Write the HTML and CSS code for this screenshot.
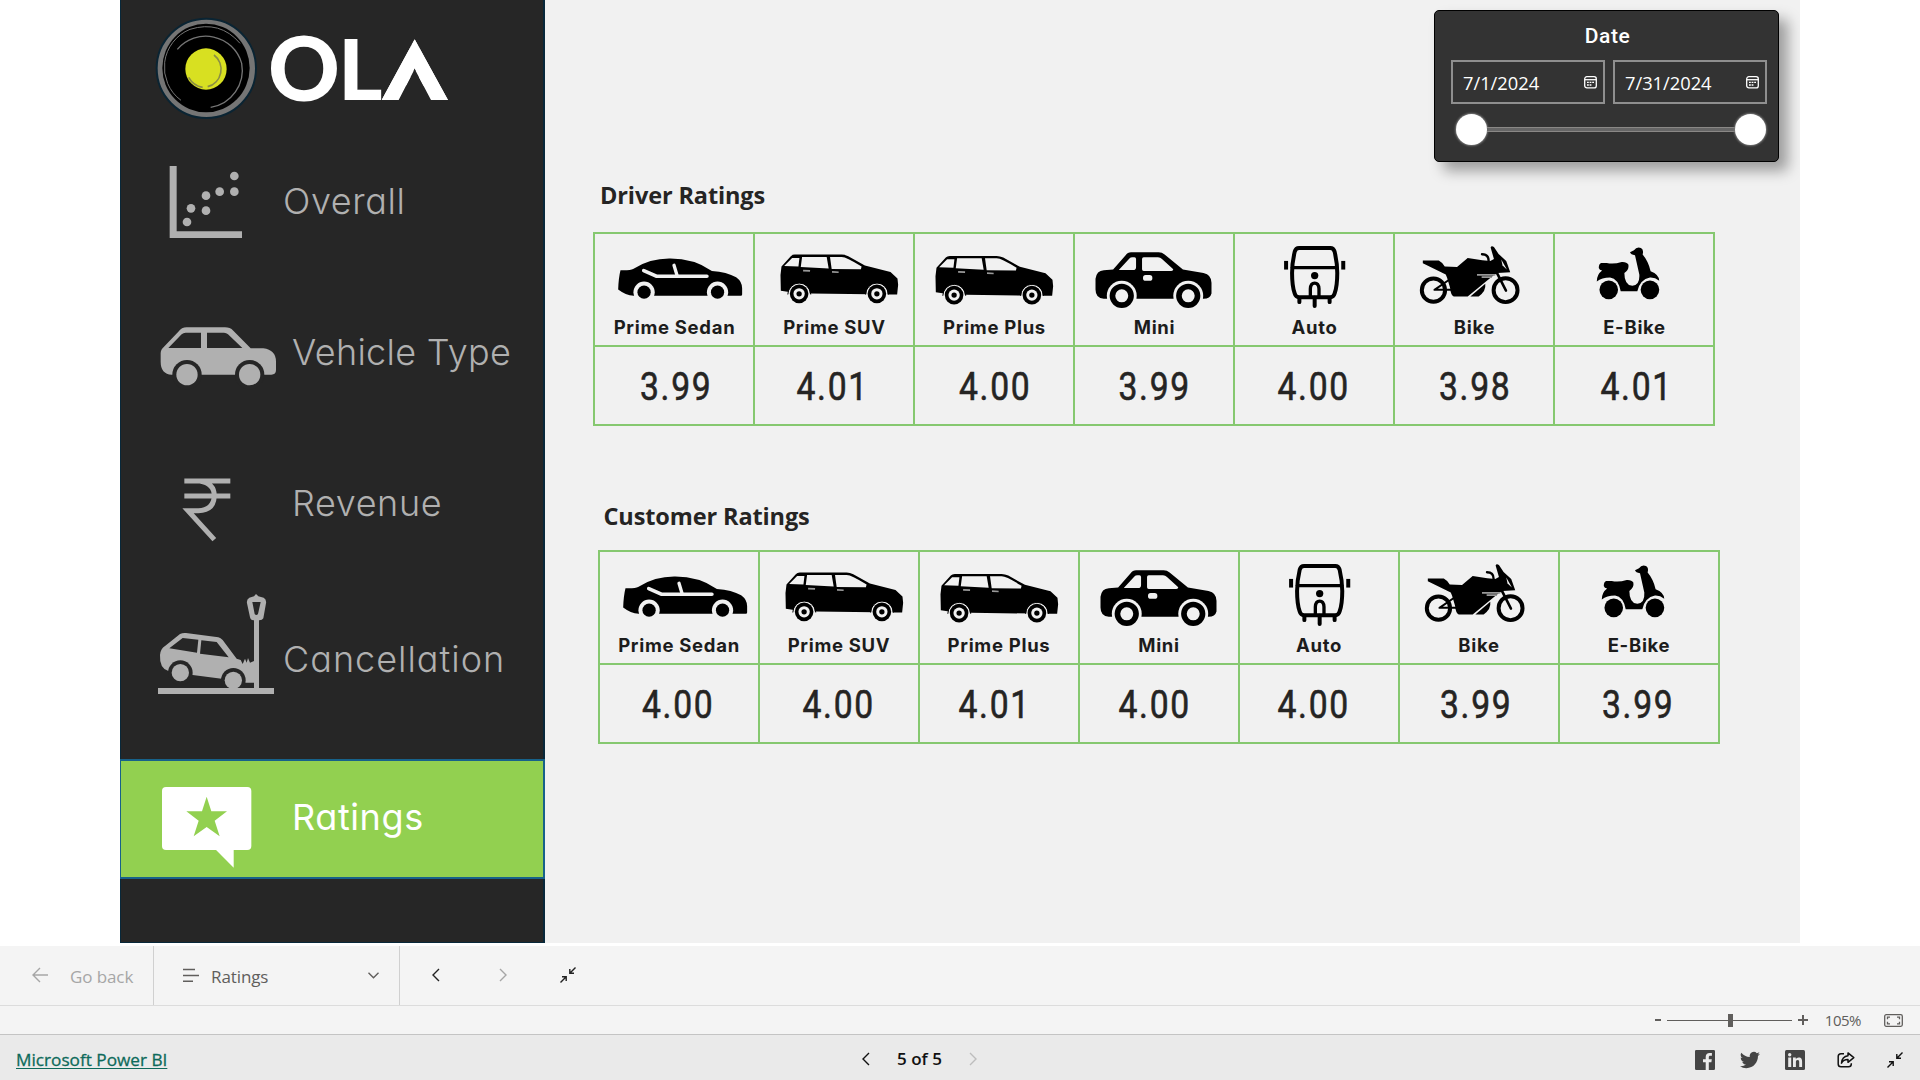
FILE: index.html
```html
<!DOCTYPE html>
<html lang="en">
<head>
<meta charset="utf-8">
<title>Ratings</title>
<link rel="stylesheet" href="styles.css">
</head>
<body>
<svg class="defs" width="0" height="0" aria-hidden="true">
  <symbol id="sedan" viewBox="41 189 480 340">
    <path d="M120 301Q150 302 158 297Q210 265 270 266Q340 266 395 303Q440 306 468 322Q486 335 486 355V374Q486 378 482 378H160Q135 376 113 359Q114 325 120 301Z"/>
    <circle class="cut" cx="191" cy="367" r="32"/><circle class="cut" cx="412" cy="367" r="32"/>
    <circle cx="191" cy="367" r="20"/><circle cx="412" cy="367" r="20"/>
    <path class="cut-line" d="M190 302L228 319H380" stroke-width="11"/><path class="cut-line" d="M281 286L290 316" stroke-width="10"/>
  </symbol>
  <symbol id="suv" viewBox="522 189 480 340">
    <path d="M604 290L632 259Q636 254 644 254H785Q795 254 805 259L855 287L932 306L953 326L955 345L952 374L926 374L692 371L622 366L602 363L601 315Z"/>
    <path class="cut" d="M612 288L636 264H658L655 290ZM666 261H740L746 296L662 291ZM750 261H785Q800 261 845 290L843 298L755 297Z"/>
    <path class="soft" d="M669 302L690 303M756 306L776 307"/>
    <g id="suv-wheel"><circle class="cut" cx="657" cy="372" r="32"/><path class="thin" d="M623 374A34 34 0 0 1 692 374"/><circle cx="657" cy="372" r="28"/><circle class="cut" cx="657" cy="372" r="17"/><circle cx="657" cy="372" r="8"/></g>
    <use href="#suv-wheel" x="234"/>
  </symbol>
  <symbol id="mini" viewBox="11 40 480 340">
    <path d="M75 178Q78 153 100 152L128 150L165 108Q172 98 182 98H265Q275 98 283 105L338 150L400 160Q424 165 424 190V222Q420 238 400 238H100Q75 236 75 210Z"/>
    <path class="cut" d="M145 151L177 117Q180 113 186 113H192Q197 113 197 118V144Q197 150 192 151ZM215 118Q215 113 220 113H263Q270 113 275 118L309 149Q309 154 303 154H220Q215 154 215 149Z"/>
    <rect class="cut" x="218" y="166" width="28" height="18" rx="8"/>
    <circle class="cut" cx="154" cy="229" r="45"/><circle class="cut" cx="354" cy="229" r="45"/>
    <circle cx="154" cy="229" r="28" class="tyre"/><circle cx="354" cy="229" r="28" class="tyre"/>
  </symbol>
  <symbol id="auto" viewBox="491 40 480 340">
    <g class="ink-line">
      <path stroke-width="12" d="M686 85H780Q790 85 793 96Q801 130 801 160Q801 200 793 222Q790 233 780 233H686Q676 233 673 222Q665 200 665 160Q665 130 673 96Q676 85 686 85Z"/>
      <path stroke-width="10" d="M666 144H800"/>
      <path stroke-width="10" d="M720 230V208Q721 191 733 191Q745 191 746 208V230"/>
      <path stroke-width="12" d="M733 235V260M687 236V248M778 236V248"/>
    </g>
    <circle cx="733" cy="168" r="11"/>
    <rect x="641" y="124" width="12" height="26"/><rect x="813" y="124" width="12" height="26"/>
  </symbol>
  <symbol id="bike" viewBox="41 40 480 340">
    <g class="ink-line">
      <circle cx="159" cy="212" r="35" stroke-width="12"/><circle cx="376" cy="212" r="36" stroke-width="12"/>
      <path stroke-width="6" d="M203 183L162 211H212"/>
      <path stroke-width="8" d="M350 160L377 213"/>
      <path stroke-width="7" d="M305 104Q325 104 325 124"/>
    </g>
    <path d="M127 123H175Q185 128 193 141L230 142L262 115L306 122L330 124L341 118L331 84Q333 77 341 82L355 103L378 124L390 158L352 160L340 167L262 231H220Q211 228 209 205L200 175L196 165L150 142L127 131Z"/>
    <path d="M270 231L315 193Q318 215 295 231Z"/>
    <path class="cut" d="M363 120L380 150L367 138Z"/>
    <path class="soft" d="M290 166H345M304 173H335"/>
  </symbol>
  <symbol id="ebike" viewBox="522 40 480 340">
    <circle cx="686" cy="211" r="28"/><circle cx="810" cy="211" r="28"/>
    <path d="M664 130Q656 132 656 145Q658 152 666 153Q650 165 650 186Q665 174 690 174Q715 178 722 215H772Q780 180 810 174Q825 173 838 184Q838 165 812 155Q805 125 788 105Q792 90 783 85Q770 80 762 92L750 98Q752 105 765 107L778 165Q780 197 757 199Q733 197 733 160Q748 150 745 135Q740 126 725 127Q700 135 680 130Z"/>
  </symbol>
  <symbol id="collapse" viewBox="0 0 16 16">
    <path d="M15.5 .5L9.8 6.2M9.8 2V6.2H14M.5 15.5L6.2 9.8M2 9.8H6.2V14"/>
  </symbol>
  <symbol id="calendar" viewBox="0 0 13 13">
    <rect x=".7" y=".7" width="11.6" height="11.2" rx="2.2"/><path d="M.7 3.7H12.3"/><path stroke-dasharray="1.8 .8" d="M3 6.4H10.4M3 9H8"/>
  </symbol>
</svg>

<main class="stage">
  <nav class="sidebar">
    <div class="brand">
      <svg width="340" height="125" viewBox="0 0 1020 375">
        <clipPath id="peak"><path d="M884 118L984 300H933L884 207L836 300H785Z"/></clipPath>
        <circle cx="259" cy="205" r="149" fill="#757575" stroke="#0a2433" stroke-width="6"/>
        <ellipse cx="258" cy="204" rx="131" ry="133" fill="#000"/>
        <g fill="none" stroke="#757575">
          <path stroke-width="3" d="M183 301A123 123 0 0 1 210 88Q300 60 360 130"/>
          <path stroke-width="4" d="M172 148A112 112 0 0 1 365 190A113 113 0 0 1 272 322"/>
        </g>
        <circle cx="258" cy="207" r="62" fill="#d8e021"/>
        <path fill="none" stroke="#8b8e45" stroke-width="5" d="M282 165A54 54 0 0 1 263 260M206 232A60 60 0 0 0 248 262"/>
        <text class="wordmark" y="304"><tspan class="round" x="444">O</tspan><tspan x="655" y="300">L</tspan></text>
        <g clip-path="url(#peak)"><text class="wordmark heavy" x="784" y="300" textLength="200" lengthAdjust="spacingAndGlyphs">A</text></g>
      </svg>
    </div>
    <a class="nav-item overall"><svg width="164" height="155" viewBox="0 375 492 465">
        <path d="M149 498H170V694H366V714H149Z"/><circle cx="343" cy="528" r="13"/><circle cx="343" cy="575" r="13"/><circle cx="299" cy="575" r="13"/><circle cx="258" cy="587" r="13"/><circle cx="258" cy="632" r="13"/><circle cx="213" cy="625" r="13"/><circle cx="201" cy="666" r="13"/></svg>
      <span>Overall</span></a>
    <a class="nav-item vehicle"><svg width="164" height="150" viewBox="0 -30 492 450">
        <path d="M122 190Q122 178 132 170L175 125Q185 112 200 112H315Q330 112 340 122L392 175H430Q468 180 468 215V240Q468 254 454 254H155Q122 252 122 215Z"/>
        <path class="hole" d="M145 174L185 133Q190 128 197 128H243V174ZM261 128H312Q319 128 324 133L367 174H261Z"/>
        <circle class="hole" cx="201" cy="254" r="44"/><circle class="hole" cx="389" cy="254" r="44"/><circle cx="201" cy="254" r="32"/><circle cx="389" cy="254" r="32"/></svg>
      <span>Vehicle Type</span></a>
    <a class="nav-item revenue"><svg width="164" height="150" viewBox="0 420 492 450">
        <path class="stroke" d="M193 573H331M193 618H331M240 573Q283 580 283 618Q280 662 235 662H204L283 749"/></svg>
      <span>Revenue</span></a>
    <a class="nav-item cancel"><svg width="164" height="179" viewBox="0 60 492 537">
        <path d="M120 285Q122 265 135 258L180 222Q188 218 198 219L295 232Q302 234 308 240L350 296L362 300L368 312L375 296L380 308L384 294L390 308L402 303V368H377L305 356L218 345L145 333Q118 325 120 285Z"/>
        <path class="hole" d="M148 265L188 234L235 239L231 278ZM244 241L290 246L326 292L240 281Z"/>
        <circle class="hole" cx="181" cy="338" r="37"/><circle class="hole" cx="340" cy="361" r="37"/><circle cx="181" cy="338" r="26"/><circle cx="340" cy="361" r="26"/>
        <path d="M114 384H402V180H417V384H462V402H114Z"/>
        <path fill-rule="evenodd" d="M388 113L402 109L408 102L415 109L431 113Q440 118 438 130L430 175Q427 181 418 181H400Q392 181 390 172L381 130Q379 118 388 113ZM397 126H422L414 162Q409 168 404 162Z"/></svg>
      <span>Cancellation</span></a>
    <a class="nav-item ratings active"><svg width="164" height="116" viewBox="3 603 492 348">
        <rect x="126" y="681" width="268" height="189" rx="12"/><path d="M286 868L341 923V868Z"/>
        <path fill="#92d050" d="M260 710L274 754H321L284 782L299 829L260 801L221 829L236 782L199 754H246Z"/></svg>
      <span>Ratings</span></a>
  </nav>

  <section class="report">
    <div class="slicer">
      <h3>Date</h3>
      <div class="inputs">
        <div class="input"><span>7/1/2024</span><svg width="13" height="13"><use href="#calendar"/></svg></div>
        <div class="input"><span>7/31/2024</span><svg width="13" height="13"><use href="#calendar"/></svg></div>
      </div>
      <div class="slider"><i class="knob"></i><i class="track"></i><i class="knob"></i></div>
    </div>

    <section class="block driver">
      <h2>Driver Ratings</h2>
      <div class="grid">
        <div class="head"><svg><use href="#sedan"/></svg><span>Prime Sedan</span></div>
        <div class="head"><svg><use href="#suv"/></svg><span>Prime SUV</span></div>
        <div class="head plus"><svg><use href="#suv"/></svg><span>Prime Plus</span></div>
        <div class="head"><svg><use href="#mini"/></svg><span>Mini</span></div>
        <div class="head"><svg><use href="#auto"/></svg><span>Auto</span></div>
        <div class="head"><svg><use href="#bike"/></svg><span>Bike</span></div>
        <div class="head"><svg><use href="#ebike"/></svg><span>E-Bike</span></div>
        <div class="value"><span>3.99</span></div><div class="value"><span>4.01</span></div><div class="value"><span>4.00</span></div><div class="value"><span>3.99</span></div><div class="value"><span>4.00</span></div><div class="value"><span>3.98</span></div><div class="value"><span>4.01</span></div>
      </div>
    </section>

    <section class="block customer">
      <h2>Customer Ratings</h2>
      <div class="grid">
        <div class="head"><svg><use href="#sedan"/></svg><span>Prime Sedan</span></div>
        <div class="head"><svg><use href="#suv"/></svg><span>Prime SUV</span></div>
        <div class="head plus"><svg><use href="#suv"/></svg><span>Prime Plus</span></div>
        <div class="head"><svg><use href="#mini"/></svg><span>Mini</span></div>
        <div class="head"><svg><use href="#auto"/></svg><span>Auto</span></div>
        <div class="head"><svg><use href="#bike"/></svg><span>Bike</span></div>
        <div class="head"><svg><use href="#ebike"/></svg><span>E-Bike</span></div>
        <div class="value"><span>4.00</span></div><div class="value"><span>4.00</span></div><div class="value"><span>4.01</span></div><div class="value"><span>4.00</span></div><div class="value"><span>4.00</span></div><div class="value"><span>3.99</span></div><div class="value"><span>3.99</span></div>
      </div>
    </section>
  </section>
</main>

<div class="toolbar">
  <div class="back"><svg class="ln" width="17" height="16"><path d="M16 8H1M8 1L1 8L8 15"/></svg><span>Go back</span></div>
  <div class="picker"><svg class="ln" width="16" height="14"><path d="M0 1.5H12M0 7.5H16M0 13.2H10"/></svg><span>Ratings</span><svg class="ln chev" width="11" height="7"><path d="M.5 .8L5.5 5.8L10.5 .8"/></svg></div>
  <div class="pager"><svg class="ln dark" width="8" height="14"><path d="M7 1L1 7L7 13"/></svg><svg class="ln" width="8" height="14"><path d="M1 1L7 7L1 13"/></svg><svg class="ln dark" width="16" height="16"><use href="#collapse"/></svg></div>
</div>
<div class="zoombar">
  <span class="minus"></span><span class="zoom-track"><i></i></span><span class="plus-sign"></span><span class="pct">105%</span>
  <svg class="fit" width="19" height="13"><rect x=".7" y=".7" width="17.6" height="11.6" rx="1.5"/><path d="M6 3.2H3.5V5.3M13 3.2H15.5V5.3M6 9.8H3.5V7.7M13 9.8H15.5V7.7"/></svg>
</div>
<footer class="footer">
  <a class="pbi">Microsoft Power BI</a>
  <div class="pages"><svg class="ln" width="8" height="14"><path d="M7 1L1 7L7 13"/></svg><span>5 of 5</span><svg class="ln off" width="8" height="14"><path d="M1 1L7 7L1 13"/></svg></div>
  <div class="social">
    <svg width="20" height="20" viewBox="0 0 20 20"><path fill="#444" d="M1.200 0H18.800Q20 0 20 1.200V18.800Q20 20 18.800 20H13.800V12.200H16.400L16.800 9.200H13.800V7.300C13.800 6.400 14.100 5.800 15.300 5.800H16.900V3.100C16.600 3.100 15.700 3 14.600 3C12.200 3 10.700 4.400 10.700 7V9.200H8V12.200H10.700V20H1.200Q0 20 0 18.800V1.200Q0 0 1.200 0Z"/></svg>
    <svg width="20" height="20" viewBox="0 0 24 24"><path fill="#444" d="M23.950 4.570a10 10 0 0 1-2.820.78 4.960 4.960 0 0 0 2.160-2.720c-.95.550-2 .95-3.130 1.180a4.920 4.920 0 0 0-8.380 4.480C7.690 8.090 4.070 6.130 1.640 3.160a4.930 4.930 0 0 0 1.520 6.570 4.900 4.900 0 0 1-2.230-.61v.06a4.920 4.920 0 0 0 3.950 4.830 5 5 0 0 1-2.210.08 4.940 4.940 0 0 0 4.600 3.420A9.870 9.870 0 0 1 0 19.540a13.990 13.990 0 0 0 7.550 2.210c9.050 0 14-7.500 14-13.980 0-.21 0-.42-.02-.63a9.940 9.940 0 0 0 2.420-2.570z"/></svg>
    <svg width="20" height="20" viewBox="0 0 20 20"><rect width="20" height="20" rx="1.500" fill="#444"/><g fill="#eaeaea"><circle cx="4.700" cy="4.700" r="1.700"/><path d="M3.200 7.600H6.200V17H3.200ZM8 7.600H10.800V8.900Q11.700 7.400 13.700 7.400C16.600 7.400 17.100 9.300 17.100 11.800V17H14.200V12.400C14.200 11.300 14.200 9.900 12.600 9.900S10.900 11.100 10.900 12.300V17H8Z"/></g></svg>
    <svg class="share" width="18" height="16" viewBox="0 0 18 16"><path d="M7 1.700H4Q1.200 1.700 1.200 4.500V12Q1.200 14.800 4 14.800H11.500Q14.300 14.800 14.300 12V11.300"/><path d="M11 .9L16.800 5.600L11 10.300V7.600Q6.500 7.500 4.500 11.200Q5 4.500 11 3.800Z"/></svg>
    <svg class="ln" width="16" height="16"><use href="#collapse"/></svg>
  </div>
</footer>
</body>
</html>
```
FILE: styles.css
```css
* { box-sizing: border-box; }
body { margin: 0; width: 1920px; height: 1080px; overflow: hidden; background: #fff; font-family: "Open Sans", "Noto Sans", sans-serif; color: #252423; display: flex; flex-direction: column; }
.defs { position: absolute; }
svg { display: block; flex: none; }
h2, h3 { margin: 0; }

.stage { display: flex; width: 1680px; height: 943px; margin: 0 120px 3px; background: #f1f1f1; overflow: hidden; flex: none; }

.sidebar { width: 425px; flex: none; background: #262626; border: 1px solid #08283a; border-width: 0 2px 1px 1px; display: flex; flex-direction: column; }
.brand { height: 125px; margin-left: -1px; }
.wordmark { font-family: Lato, sans-serif; font-weight: 900; font-size: 254px; fill: #fff; }
.round { font-size: 266px; }
.heavy { stroke: #fff; stroke-width: 34; }
.nav-item { display: flex; width: 425px; margin-left: -1px; flex: none; color: #b0b0b0; fill: currentColor; font-family: Inter, sans-serif; font-weight: 330; font-size: 36px; line-height: 42px; letter-spacing: .6px; font-feature-settings: "cv11"; white-space: nowrap; }
.nav-item .hole { fill: #262626; }
.nav-item .stroke { fill: none; stroke: currentColor; stroke-width: 15; }
.overall { height: 155px; }
.overall span { margin: 55px 0 0 -1px; }
.vehicle { height: 150px; letter-spacing: .300px; }
.vehicle span { margin: 51px 0 0 8px; }
.revenue { height: 150px; }
.revenue span { margin: 52px 0 0 8px; }
.cancel { height: 179px; letter-spacing: 1px; }
.cancel span { margin: 58px 0 0 -1px; }
.active { width: 425px; height: 120px; color: #fff; background: #92d050; border: 2px solid #17628a; border-left-width: 1px; }
.active span { margin: 35px 0 0 7px; font-weight: 370; }

.report { flex: 1; position: relative; }
.slicer { position: absolute; left: 889px; top: 10px; width: 345px; height: 152px; background: #333; border: 1px solid #000; border-radius: 5px; box-shadow: 9px 9px 14px rgba(0,0,0,.35); color: #fff; padding: 12px 11px 0 16px; }
.slicer h3 { font-family: Roboto, sans-serif; font-weight: 500; font-size: 21px; line-height: 26px; text-align: center; letter-spacing: .6px; padding-right: 3px; }
.inputs { display: flex; gap: 8px; margin-top: 11px; }
.input { width: 154px; height: 44px; border: 2px solid #8f8f8f; display: flex; align-items: center; justify-content: space-between; padding: 1px 6px 0 10px; font-size: 18.300px; }
.input svg { margin-top: -1px; fill: none; stroke: #fff; stroke-width: 1.300; }
.slider { display: flex; align-items: center; margin-top: 10px; padding: 0 1px 0 5px; }
.knob { width: 31px; height: 31px; border-radius: 50%; background: #fff; box-shadow: 0 0 2px 1px #777; flex: none; }
.track { flex: 1; height: 5px; background: #666; border: 1px solid #8a8886; border-width: 1px 0; }

.driver { padding: 179px 0 0 48px; }
.customer { padding: 74px 0 0 52.500px; }
.block h2 { font-size: 23.500px; font-weight: 700; line-height: 33px; letter-spacing: -.12px; padding-left: 7px; white-space: nowrap; }
.customer h2 { padding-left: 6px; }
.grid { display: grid; grid-template-columns: repeat(7, 160px); grid-template-rows: 113px 79px; margin-top: 20px; width: 1122px; border: solid #86c870; border-width: 2px 0 0 2px; }
.customer .grid { margin-top: 17px; }
.head, .value { border: solid #86c870; border-width: 0 2px 2px 0; }
.head { overflow: hidden; text-align: center; font-family: Inter, sans-serif; font-weight: 650; font-size: 18.500px; line-height: 24px; letter-spacing: .7px; color: #1c1c1c; }
.head svg { width: 160px; height: 113px; margin: -1px 0 -31px -1px; fill: #000; }
.head.plus svg { transform: translate(-5px, 1.300px); }
.head span { display: block; padding-left: 1px; }
.cut { fill: #f1f1f1; }
.cut-line { fill: none; stroke: #f1f1f1; stroke-linecap: round; }
.soft { fill: none; stroke: #999; stroke-width: 5; }
.thin { fill: none; stroke: #000; stroke-width: 3; }
.tyre { fill: none; stroke: #000; stroke-width: 17; }
.ink-line { fill: none; stroke: #000; stroke-linecap: round; stroke-linejoin: round; }
.value { --shift: 1.500px; display: flex; justify-content: center; font-family: Roboto, sans-serif; font-size: 38.700px; line-height: 79px; color: #252423; }
.value span { transform: translateX(var(--shift)) scaleX(.87); letter-spacing: 2px; -webkit-text-stroke: .6px #252423; }
.driver .value:nth-child(8) { --shift: 2.500px; }
.driver .value:nth-child(9) { --shift: -1px; }
.driver .value:nth-child(11) { --shift: 1px; }
.driver .value:nth-child(12) { --shift: 0px; }
.driver .value:nth-child(14) { --shift: 3px; }
.customer .value:nth-child(8), .customer .value:nth-child(14) { --shift: -.500px; }
.customer .value:nth-child(9) { --shift: 0px; }
.customer .value:nth-child(10), .customer .value:nth-child(11) { --shift: -4px; }
.customer .value:nth-child(12) { --shift: -5px; }
.customer .value:nth-child(13) { --shift: -2.500px; }

.toolbar { height: 60px; flex: none; background: #f4f4f4; border-bottom: 1px solid #dcdcdc; display: flex; color: #605e5c; font-size: 17px; padding-bottom: 1px; letter-spacing: -.1px; }
.toolbar > div { display: flex; align-items: center; margin-bottom: -1px; padding-bottom: 1px; }
.toolbar .back { width: 154px; padding-left: 32px; border-right: 1px solid #d0d0d0; color: #a6a6a6; }
.back span { margin-left: 21px; padding-top: 3px; }
.toolbar .picker { width: 246px; padding: 0 20px 1px 29px; border-right: 1px solid #d0d0d0; }
.picker span { margin-left: 12px; padding-top: 3px; }
.chev { margin-left: auto; }
.toolbar .pager { padding-left: 32px; gap: 59px; color: #a6a6a6; }
.pager svg:last-child { margin-left: -6px; }
.ln { fill: none; stroke: currentColor; stroke-width: 1.400; }
.dark { color: #222; }

.zoombar { height: 29px; flex: none; background: #f4f4f4; border-bottom: 1px solid #c4c4c4; display: flex; align-items: center; justify-content: flex-end; padding-right: 17px; color: #605e5c; }
.minus { width: 6px; height: 2px; background: #605e5c; margin-right: 6px; }
.zoom-track { width: 125px; height: 1px; background: #605e5c; display: flex; align-items: center; justify-content: center; }
.zoom-track i { width: 5px; height: 13px; background: #605e5c; margin-left: 2px; }
.plus-sign { width: 10px; height: 10px; margin-left: 6px; background: linear-gradient(#605e5c,#605e5c) center/10px 2px no-repeat, linear-gradient(#605e5c,#605e5c) center/2px 10px no-repeat; }
.pct { font-size: 15px; letter-spacing: -.5px; margin: 0 23px 0 17px; }
.fit { fill: none; stroke: #605e5c; stroke-width: 1.300; }

.footer { flex: 1; background: #eaeaea; display: grid; grid-template-columns: 1fr auto 1fr; align-items: center; padding: 4px 17px 0 16px; color: #111; }
.pbi { font-size: 17.200px; color: #0e6a5b; text-decoration: underline; text-underline-offset: 2px; justify-self: start; -webkit-text-stroke: .3px #0e6a5b; }
.pages { display: flex; align-items: center; gap: 27px; font-size: 17px; font-weight: 600; margin: -2px 80px 0 0; }
.off { color: #bdbdbd; }
.social { display: flex; align-items: center; justify-content: flex-end; }
.social svg { margin-left: 25px; }
.social .share { fill: none; stroke: #111; stroke-width: 1.500; stroke-linejoin: round; margin-left: 32px; }
.social svg:last-child { margin-left: 32px; }
```
